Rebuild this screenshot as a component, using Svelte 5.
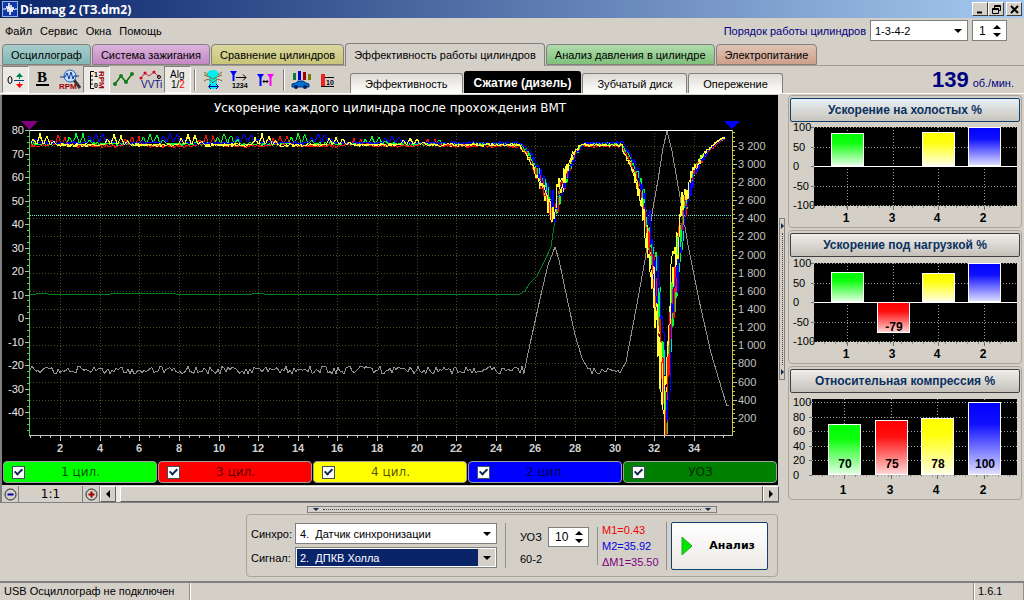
<script>
    const tabs = [
        { name: 'Осциллограф', tone: 'teal' },
        { name: 'Система зажигания', tone: 'violet' },
        { name: 'Сравнение цилиндров', tone: 'olive' },
        { name: 'Эффективность работы цилиндров', tone: 'current' },
        { name: 'Анализ давления в цилиндре', tone: 'green' },
        { name: 'Электропитание', tone: 'rose' }
    ];
    const modes = ['Эффективность', 'Сжатие (дизель)', 'Зубчатый диск', 'Опережение'];
    let mode = 'Сжатие (дизель)';

    let channels = [
        { name: '1 цил.', color: '#00ff00', on: true },
        { name: '3 цил.', color: '#ff0000', on: true },
        { name: '4 цил.', color: '#ffff00', on: true },
        { name: '2 цил.', color: '#0000ff', on: true },
        { name: 'УОЗ', color: '#008000', on: true }
    ];

    let count = 1;
    let advance = 10;

    // main chart scales
    const px = (t) => Math.round(18.5 + t * 19.8);
    const py = (v) => Math.round(223 - v * 2.35);
    const pr = (v) => Math.round(341 - v * 0.0907);
    const left = 28;
    const right = 730;
    const top = 35;
    const bottom = 341;

    const range = (from, to, step) => {
        const out = [];
        for (let v = from; v <= to; v += step) out.push(v);
        return out;
    };
    const xLabels = range(2, 34, 2);
    const yLabels = range(-40, 80, 10);
    const rLabels = range(200, 3200, 200);
    const spaced = (v) => (v >= 1000 ? Math.floor(v / 1000) + ' ' + String(v % 1000).padStart(3, '0') : v);

    function noise(seed) {
        let s = seed;
        return () => {
            s = (s * 16807) % 2147483647;
            return s / 2147483647;
        };
    }

    // mean cylinder acceleration: flat, dip, flat, deep dip
    const shape = [
        [28, 49], [518, 49], [526, 57], [535, 75], [546, 100], [554, 120], [560, 95], [572, 62],
        [581, 49], [620, 49], [632, 70], [641, 100], [646, 130], [653, 175], [658, 225], [662, 275],
        [665, 337], [667, 270], [671, 205], [677, 160], [683, 115], [693, 75], [705, 57], [716, 47], [724, 42]
    ];
    function level(x) {
        for (let i = 1; i < shape.length; i++) {
            const [x0, y0] = shape[i - 1];
            const [x1, y1] = shape[i];
            if (x <= x1) return y0 + ((y1 - y0) * (x - x0)) / (x1 - x0);
        }
        return 42;
    }

    function cylinder(seed, base, phase, shift) {
        const rnd = noise(seed);
        let d = '';
        for (let x = left + 1; x <= 723; x += 1) {
            const dip = (x > 518 && x < 581) || x > 620;
            let y = level(x + (dip ? shift : 0)) + base;
            if (dip) {
                const depth = Math.max(0, level(x) - 52);
                y += (rnd() - 0.5) * Math.min(70, 2 + depth * 0.45);
            } else {
                const at = (x - phase + 740) % 74;
                if (x < 440 && at < 32) {
                    const fade = Math.sin((at / 32) * Math.PI) * (x > 330 ? 0.7 : 1);
                    y -= (Math.abs((at % 7) - 3.5) / 3.5) * 12 * fade * (0.7 + rnd() * 0.3);
                } else {
                    y += (rnd() - 0.5) * 3;
                }
            }
            d += (d ? 'L' : 'M') + x + ' ' + Math.min(bottom - 1, Math.max(top + 3, y)).toFixed(1);
        }
        return d;
    }

    const traces = [
        { color: '#ffff30', d: cylinder(7213, 1, 98, 2), i: 2 },
        { color: '#00ff30', d: cylinder(5501, 0, 60, 0), i: 0 },
        { color: '#ff1010', d: cylinder(911, 2, 42, 1), i: 1 },
        { color: '#0000ff', d: cylinder(377, -1, 80, -1), i: 3 },
        { color: '#ffff30', d: cylinder(3301, 1, 98, 3), i: 2 }
    ];

    function wobble(from, to, y, amp, seed) {
        const rnd = noise(seed);
        let d = '';
        for (let x = from; x <= to; x += 2) d += 'L' + x + ' ' + (y + (rnd() - 0.5) * amp).toFixed(1);
        return d;
    }
    const rpmTrace =
        'M28 275' + wobble(30, 522, 275, 8, 71) +
        'L525 263L530 240L534 222L540 195L546 170L553 152L557 165L565 203L573 240L580 263L586 274' +
        wobble(588, 620, 276, 6, 45) +
        'L624 267L635 209L643 165L651 113L656 85L661 53L665 36L670 56L678 102L686 150L697 205L709 258L720 295L725 311L727 310';
    const advanceTrace =
        'M28 199L34 199L36 198L46 199L108 199L112 198L118 199L132 198L140 199L168 198L174 199L250 199L255 198L262 199L518 199L523 196L527 189L535 181L543 165L549 152L551 138L553 126L554 110';

    const panels = [
        {
            title: 'Ускорение на холостых %', zero: 45, unit: 0.39, x: 25, top: 6, bottom: 85, valueY: 74,
            ticks: [100, 50, 0, -50, -100], current: true,
            bars: [
                { n: 1, v: 85, x: 42 }, { n: 3, v: 0, x: 88 }, { n: 4, v: 87, x: 133 }, { n: 2, v: 100, x: 179 }
            ]
        },
        {
            title: 'Ускорение под нагрузкой %', zero: 45, unit: 0.39, x: 25, top: 6, bottom: 85, valueY: 74,
            ticks: [100, 50, 0, -50, -100],
            bars: [
                { n: 1, v: 77, x: 42 }, { n: 3, v: -79, x: 88, text: '-79' }, { n: 4, v: 75, x: 133 }, { n: 2, v: 100, x: 179 }
            ]
        },
        {
            title: 'Относительная компрессия %', zero: 82, unit: 0.73, x: 23, top: 6, bottom: 82, valueY: 75,
            ticks: [100, 80, 60, 40, 20, 0],
            bars: [
                { n: 1, v: 70, x: 39, text: '70' }, { n: 3, v: 75, x: 86, text: '75' },
                { n: 4, v: 78, x: 132, text: '78' }, { n: 2, v: 100, x: 179, text: '100' }
            ]
        }
    ];
    const fills = { 1: 'g-green', 3: 'g-red', 4: 'g-yellow', 2: 'g-blue' };
</script>

<div class="window">
    <header class="title-bar">
        <svg class="logo" width="16" height="16" viewBox="0 0 16 16">
            <rect x=".5" y=".5" width="15" height="15" fill="#1038a8" stroke="#8fb4e8" />
            <path d="M1 8H4L5 5L6 11L7 2L8 14L9 4L10 11L11 6L12 9L13 8H15" fill="none" stroke="#fff" />
        </svg>
        <h1>Diamag 2 (ТЗ.dm2)</h1>
        <div class="window-btns">
            <button aria-label="Свернуть"><svg width="9" height="9"><path d="M1 7.500H6" stroke="#000" stroke-width="2" /></svg></button>
            <button aria-label="Восстановить"><svg width="9" height="9"><path d="M2.500 3V.5H8.500V5.500H7M2.500 1.500H8.500M.5 3.500H6.500V8.500H.5ZM.5 4.500H6.500" fill="none" stroke="#000" /></svg></button>
            <button class="close" aria-label="Закрыть"><svg width="9" height="9"><path d="M1 1L8 8M8 1L1 8" stroke="#000" stroke-width="2" /></svg></button>
        </div>
    </header>

    <div class="menu-bar">
        <nav>
            <button>Файл</button>
            <button>Сервис</button>
            <button>Окна</button>
            <button>Помощь</button>
        </nav>
        <label for="order">Порядок работы цилиндров</label>
        <div class="select order">
            <select id="order"><option>1-3-4-2</option><option>1-2-4-3</option></select>
        </div>
        <div class="spin small">
            <input type="text" aria-label="Цилиндр" bind:value={count} />
            <div class="arrows">
                <button aria-label="Больше" on:click={() => count++}><i class="up"></i></button>
                <button aria-label="Меньше" on:click={() => count--}><i class="down"></i></button>
            </div>
        </div>
    </div>

    <nav class="tabs">
        {#each tabs as tab}
            <button class="tab {tab.tone}">{tab.name}</button>
        {/each}
    </nav>

    <div class="tool-row">
        <div class="tools">
            <button class="tool pressed" aria-label="Ноль">
                <svg width="24" height="24"><ellipse cx="6" cy="12" rx="2" ry="3.500" fill="none" stroke="#000" /><path d="M10 12.500H20" stroke="#004080" /><path d="M15.500 5L12 9H15V11H16V9H19Z" fill="#008040" /><path d="M15.500 20L12 16H15V14H16V16H19Z" fill="#f00" /></svg>
            </button>
            <button class="tool" aria-label="Жирный">
                <svg width="24" height="24"><text x="6" y="14" class="ico-b">B</text><path d="M5 17H18" stroke="#000" stroke-width="2" /></svg>
            </button>
            <button class="tool" aria-label="Обороты">
                <svg width="26" height="24"><path d="M17 12L23 20" stroke="#333" stroke-width="3" /><circle cx="13" cy="8" r="6" fill="#c4dcff" stroke="#2860b0" /><path d="M3 9H8L10 5L12 11L14 4L16 11L17 8H22" fill="none" stroke="#103a90" /><text x="2" y="21" class="ico-s" fill="#a00000">RPM</text></svg>
            </button>
            <button class="tool pressed" aria-label="Шкала оборотов">
                <svg width="24" height="24"><path d="M9 3.500H5.500V20.500H9M6 12H8M6 8H8M6 16H8" fill="none" stroke="#000" /><text x="9" y="9" class="ico-n">1</text><text x="9" y="20" class="ico-n">0</text><text x="3" y="-14" class="ico-s" fill="#a00000" transform="rotate(90)">RPM</text></svg>
            </button>
            <button class="tool" aria-label="Точки">
                <svg width="24" height="24"><path d="M3 16L9 8L14 14L20 6" fill="none" stroke="#107010" stroke-width="1.500" /><g fill="#108020"><circle cx="3" cy="16" r="2" /><circle cx="9" cy="8" r="2" /><circle cx="14" cy="14" r="2" /><circle cx="20" cy="6" r="2" /></g></svg>
            </button>
            <button class="tool" aria-label="VVTi">
                <svg width="26" height="24"><path d="M3 10L7 5L11 8L16 4L21 9" fill="none" stroke="#c03050" /><g fill="#d00020"><circle cx="3" cy="10" r="1.500" /><circle cx="7" cy="5" r="1.500" /><circle cx="16" cy="4" r="1.500" /></g><circle cx="21" cy="9" r="1.500" fill="none" stroke="#000" /><text x="3" y="20" class="ico-t" fill="#101080">VVTi</text></svg>
            </button>
            <button class="tool pressed" aria-label="Алгоритм">
                <svg width="24" height="24"><text x="4" y="10" class="ico-t">Alg</text><text x="5" y="20" class="ico-t">1/<tspan fill="#f00">2</tspan></text></svg>
            </button>
            <span class="sep"></span>
            <button class="tool" aria-label="Наложение">
                <svg width="24" height="24"><ellipse cx="12" cy="6" rx="6" ry="4" fill="#00f0f0" /><path d="M8 9H16V21H8Z" fill="#00f0f0" /><path d="M3 7Q7 8 12 11Q17 8 21 7M3 13Q8 9 12 15Q16 9 21 13M3 4L7 7M21 4L17 7" fill="none" stroke="#806020" /><path d="M8 18.500H17M10 16L7.500 18.500L10 21M15 16L17.500 18.500L15 21" fill="none" stroke="#00a" /></svg>
            </button>
            <button class="tool" aria-label="Маркеры по порядку">
                <svg width="24" height="24"><path d="M2 3H9L5.500 8Z" fill="#00f" /><path d="M5.500 5V13" stroke="#00f" stroke-width="2" /><path d="M8 9.500H18M15 6.500L18 9.500L15 12.500" fill="none" stroke="#000" /><text x="4" y="20" class="ico-n">1234</text></svg>
            </button>
            <button class="tool" aria-label="Интервал">
                <svg width="24" height="24"><path d="M2 6H9L5.500 11Z" fill="#00f" /><path d="M5.500 9V18" stroke="#00f" stroke-width="2" /><path d="M12 6H19L15.500 11Z" fill="#f0f" /><path d="M15.500 9V18" stroke="#f0f" stroke-width="2" /><path d="M8 13.500H13M9.500 12L8 13.500L9.500 15M11.500 12L13 13.500L11.500 15" fill="none" stroke="#000" /></svg>
            </button>
            <span class="sep"></span>
            <button class="tool" aria-label="Автомобиль">
                <svg width="24" height="24"><path d="M3 5H6V12H3Z" fill="#008040" /><path d="M8 3H11V12H8Z" fill="#00c" /><path d="M13 4H16V12H13Z" fill="#a00000" /><path d="M18 6H21V12H18Z" fill="#708000" /><path d="M2 19V16L6 15L8 13H13L16 15L19 16V19Z" fill="#0070d0" stroke="#003080" /><circle cx="6" cy="19" r="2" fill="#002060" /><circle cx="15" cy="19" r="2" fill="#002060" /></svg>
            </button>
            <button class="tool" aria-label="Десять">
                <svg width="24" height="24"><path d="M4 6H8V18H4Z" fill="#f02020" /><path d="M8 9.500H17M4 18.500H17" stroke="#000" /><text x="9" y="17" class="ico-n">10</text></svg>
            </button>
        </div>
        <nav class="modes">
            {#each modes as m}
                <button class:active={m === mode} on:click={() => (mode = m)}>{m}</button>
            {/each}
        </nav>
        <div class="rpm"><b>139</b><span>об./мин.</span></div>
    </div>

    <main>
        <section class="scope">
            <div class="screen">
                <svg class="plot" viewBox="0 0 776 365">
                    <g class="grid">
                        {#each rLabels as v}
                            <path d="M{left} {pr(v)}.5H{right}" />
                        {/each}
                        {#each xLabels as t}
                            <path d="M{px(t)}.5 {top}V{bottom}" />
                        {/each}
                    </g>
                    <path d="M28 120.500H730" class="cursor" />
                    <path d={rpmTrace} class="trace" stroke="#909090" />
                    {#if channels[4].on}
                        <path d={advanceTrace} class="trace" stroke="#008020" />
                    {/if}
                    {#each traces as t}
                        {#if channels[t.i].on}
                            <path d={t.d} class="trace" stroke={t.color} />
                        {/if}
                    {/each}
                    <path d="M28 35.500H730" stroke="#fff" />
                    <path d="M27.500 35V341" stroke="#58c858" />
                    <path d="M730.500 35V341" stroke="#c8c840" />
                    <path d="M27 340.500H731" stroke="#c8c8c8" />
                    {#each range(-47.5, 77.5, 2.5) as v}
                        <path d="M25 {py(v)}.5H28" stroke="#58c858" />
                    {/each}
                    {#each yLabels as v}
                        <path d="M23 {py(v)}.5H28" stroke="#a0c8a0" />
                        <text x="22" y={py(v) + 4} class="y-label">{v}</text>
                    {/each}
                    {#each range(50, 3350, 50) as v}
                        <path d="M731 {pr(v)}.5H733" stroke="#c8c840" />
                    {/each}
                    {#each rLabels as v}
                        <path d="M731 {pr(v)}.5H735" stroke="#c0c0a0" />
                        <text x="736" y={pr(v) + 4} class="r-label">{spaced(v)}</text>
                    {/each}
                    {#each range(0.5, 35.5, 0.5) as t}
                        <path d="M{px(t)}.5 341V343" stroke="#c8c8c8" />
                    {/each}
                    {#each xLabels as t}
                        <path d="M{px(t)}.5 341V346" stroke="#c8c8c8" />
                        <text x={px(t)} y="357" class="x-label">{t}</text>
                    {/each}
                    <path d="M19 26H36L27.500 35Z" fill="#800080" />
                    <path d="M722 26H738L730 34Z" fill="#0000ff" />
                    <text x="388" y="17" class="plot-title">Ускорение каждого цилиндра после прохождения ВМТ</text>
                </svg>
                <div class="legend">
                    {#each channels as ch}
                        <label style="background: {ch.color}">
                            <input type="checkbox" bind:checked={ch.on} />
                            <span>{ch.name}</span>
                        </label>
                    {/each}
                </div>
            </div>
            <div class="scroll-row">
                <button class="zoom" aria-label="Уменьшить"><svg width="15" height="15"><circle cx="7.500" cy="7.500" r="5.500" fill="none" stroke="#222" /><path d="M4.500 7.500H10.500" stroke="#00a" stroke-width="2" /></svg></button>
                <output>1:1</output>
                <button class="zoom" aria-label="Увеличить"><svg width="15" height="15"><circle cx="7.500" cy="7.500" r="5.500" fill="none" stroke="#222" /><path d="M4.500 7.500H10.500M7.500 4.500V10.500" stroke="#a00000" stroke-width="2" /></svg></button>
                <button class="step" aria-label="Влево"><i class="back"></i></button>
                <div class="track"><div class="thumb"></div></div>
                <button class="step" aria-label="Вправо"><i class="fwd"></i></button>
            </div>
        </section>

        <div class="v-split"><div class="grip"><i class="fwd"></i><span></span><i class="fwd"></i></div></div>

        <aside>
            <svg width="0" height="0" class="defs">
                <defs>
                    <linearGradient id="g-green" x2="0" y2="1"><stop stop-color="#00ff00" /><stop offset=".3" stop-color="#10ff10" /><stop offset="1" stop-color="#e4ffe4" /></linearGradient>
                    <linearGradient id="g-red" x2="0" y2="1"><stop stop-color="#ff0000" /><stop offset=".3" stop-color="#ff1010" /><stop offset="1" stop-color="#ffd8d8" /></linearGradient>
                    <linearGradient id="g-yellow" x2="0" y2="1"><stop stop-color="#ffff00" /><stop offset=".3" stop-color="#ffff10" /><stop offset="1" stop-color="#ffffe4" /></linearGradient>
                    <linearGradient id="g-blue" x2="0" y2="1"><stop stop-color="#0000ff" /><stop offset=".3" stop-color="#1010ff" /><stop offset="1" stop-color="#e0e0ff" /></linearGradient>
                </defs>
            </svg>
            {#each panels as p}
                <div class="panel">
                    <button class="panel-btn" class:current={p.current}>{p.title}</button>
                    <svg viewBox="1 0 230 106">
                        <rect x={p.x} y={p.top} width={228 - p.x} height={p.bottom - p.top} fill="#000" />
                        {#each p.ticks as v}
                            <path d="M{p.x} {Math.round(p.zero - v * p.unit)}.5H228" class="dots" />
                            <path d="M{p.x - 3} {Math.round(p.zero - v * p.unit)}.5H{p.x}" stroke="#707070" />
                            <text x="4" y={Math.round(p.zero - v * p.unit) + 4} class="tick">{v}</text>
                        {/each}
                        {#each range(p.x + 10, 220, 11) as x}
                            <path d="M{x}.5 {p.bottom}V{p.bottom + 2}" stroke="#909090" />
                        {/each}
                        {#each p.bars as b}
                            <path d="M{b.x + 16}.5 {p.top}V{p.bottom}" class="dots" />
                            <path d="M{b.x + 16}.5 {p.bottom}V{p.bottom + 4}" stroke="#707070" />
                            {#if b.v}
                                <rect
                                    x={b.x + 0.5}
                                    y={Math.round(p.zero - Math.max(b.v, 0) * p.unit) + 0.5}
                                    width="32"
                                    height={Math.round(Math.abs(b.v) * p.unit) - 1}
                                    fill="url(#{fills[b.n]})"
                                    stroke="#fff"
                                />
                            {/if}
                            {#if b.text}
                                <text x={b.x + 17} y={p.valueY} class="value">{b.text}</text>
                            {/if}
                            <text x={b.x + 15} y="101" class="num">{b.n}</text>
                        {/each}
                        {#if p.zero < 80}
                            <path d="M{p.x} {p.zero}.5H228" stroke="#fff" />
                        {/if}
                    </svg>
                </div>
            {/each}
        </aside>
    </main>

    <footer>
        <div class="h-split"><i class="down"></i><span></span><i class="down"></i></div>
        <div class="controls">
            <div class="sources">
                <label for="sync">Синхро:</label>
                <div class="select"><select id="sync"><option>4.&nbsp; Датчик синхронизации</option></select></div>
                <label for="signal">Сигнал:</label>
                <div class="select focused"><select id="signal"><option>2.&nbsp; ДПКВ Холла</option></select></div>
            </div>
            <div class="angle">
                <label for="adv">УОЗ</label>
                <div class="spin">
                    <input id="adv" type="text" bind:value={advance} />
                    <div class="arrows">
                        <button aria-label="Больше" on:click={() => advance++}><i class="up"></i></button>
                        <button aria-label="Меньше" on:click={() => advance--}><i class="down"></i></button>
                    </div>
                </div>
                <span>60-2</span>
            </div>
            <div class="markers">
                <span class="m1">M1=0.43</span>
                <span class="m2">M2=35.92</span>
                <span class="dm">ΔM1=35.50</span>
            </div>
            <button class="analyse">
                <svg width="12" height="20"><path d="M1 1L11 10L1 19Z" fill="#00e800" stroke="#30a030" /></svg>
                <span>Анализ</span>
            </button>
        </div>
    </footer>

    <div class="status">
        <span>USB Осциллограф не подключен</span>
        <span></span>
        <span>1.6.1</span>
    </div>
</div>

<style>
    :global(body) { margin: 0; background: #d4d0c8; }
    .window { display: flex; flex-direction: column; min-height: 100vh; background: #d4d0c8; color: #000; font: 11px "Liberation Sans", Arial, sans-serif; }
    .window * { box-sizing: border-box; }
    button { margin: 0; padding: 0; border: none; background: none; color: inherit; font: inherit; }
    svg { display: block; }

    .title-bar { display: flex; align-items: center; height: 18px; padding: 0 2px; gap: 2px; background: linear-gradient(90deg, #0a246a, #a6caf0); }
    .title-bar h1 { flex: 1; margin: 0; color: #fff; font: bold 12px "Open Sans", "Noto Sans", sans-serif; }
    .window-btns { display: flex; }
    .window-btns button { display: flex; align-items: center; justify-content: center; width: 16px; height: 14px; background: #d4d0c8; border: 1px solid; border-color: #fff #404040 #404040 #fff; }
    .window-btns .close { margin-left: 2px; }

    .menu-bar { display: flex; align-items: center; height: 25px; padding: 0 17px 0 5px; }
    .menu-bar nav { display: flex; flex: 1; gap: 8px; }
    .menu-bar label { margin-right: 4px; color: #000080; }
    .menu-bar .order { width: 98px; margin-right: 4px; }

    .select { position: relative; height: 21px; background: #fff; border: 1px solid #808080; }
    .select select { appearance: none; width: 100%; height: 19px; padding: 0 20px 0 4px; border: none; outline: none; background: transparent; color: #000; font: 11px "Liberation Sans", Arial, sans-serif; }
    .select::after { content: ""; position: absolute; right: 5px; top: 8px; border: 4px solid transparent; border-top-color: #000; border-bottom: 0; pointer-events: none; }
    .focused { padding: 1px; }
    .focused select { height: 17px; background: linear-gradient(#0a246a, #0a246a) left / calc(100% - 17px) 100% no-repeat #d4d0c8; color: #fff; padding-left: 3px; }

    .spin { display: flex; width: 41px; height: 20px; background: #fff; border: 1px solid #808080; }
    .small { width: 35px; height: 21px; }
    .spin input { flex: 1; min-width: 0; padding: 0 0 0 6px; border: none; outline: none; background: none; font: 12px "Liberation Sans", Arial, sans-serif; }
    .arrows { display: flex; flex-direction: column; justify-content: center; gap: 4px; width: 18px; }
    .arrows button { display: flex; justify-content: center; }

    i { display: block; width: 0; height: 0; border: 4px solid transparent; }
    .up { border-bottom-color: #000; border-top: 0; }
    .down { border-top-color: #000; border-bottom: 0; }
    .back { border-right-color: #000; border-left: 0; }
    .fwd { border-left-color: #000; border-right: 0; }

    .tabs { display: flex; align-items: flex-end; height: 23px; padding-left: 2px; border-bottom: 1px solid #a09c94; gap: 1px; }
    .tab { height: 21px; padding: 0 8px; border: 1px solid #808080; border-radius: 4px 4px 0 0; white-space: nowrap; }
    .teal { background: linear-gradient(#a8cccc, #80b8b4); }
    .violet { background: linear-gradient(#dcb4dc, #c488c4); }
    .olive { background: linear-gradient(#dcd8a0, #c8c478); }
    .current { height: 23px; margin-bottom: -1px; background: #d4d0c8; border-bottom: none; }
    .green { background: linear-gradient(#b0dcac, #80c07c); }
    .rose { background: linear-gradient(#e0c4b4, #cca08c); }

    .tool-row { display: flex; align-items: flex-end; height: 28px; border-bottom: 1px solid #fff; }
    .tools { display: flex; align-items: center; width: 348px; height: 27px; padding-left: 2px; }
    .tool { display: flex; align-items: center; justify-content: center; width: 27px; height: 27px; }
    .pressed { background: #ebe9e4; border: 1px solid; border-color: #808080 #fff #fff #808080; }
    .sep { width: 2px; height: 22px; margin: 0 3px; border-left: 1px solid #808080; border-right: 1px solid #fff; }
    .ico-b { font: bold 15px "Liberation Serif", serif; }
    .ico-s { font: bold 8px "Liberation Sans", sans-serif; }
    .ico-t { font: 10px "Liberation Sans", sans-serif; }
    .ico-n { font: bold 7px "Liberation Sans", sans-serif; }

    .modes { display: flex; align-items: flex-end; gap: 1px; padding-left: 2px; }
    .modes button { height: 20px; padding: 0 14px; background: linear-gradient(#dedad4, #fff); border: 1px solid #808080; border-bottom: none; border-radius: 3px 3px 0 0; white-space: nowrap; }
    .modes .active { height: 22px; padding: 0 9px; background: #000; border-color: #000; color: #fff; font: bold 12px "Liberation Sans", Arial, sans-serif; }
    .rpm { display: flex; flex: 1; align-items: baseline; justify-content: flex-end; gap: 4px; padding-right: 10px; color: #000080; }
    .rpm b { font-size: 22px; }

    main { display: grid; grid-template-columns: minmax(0, 1fr) 6px 239px; padding-top: 1px; }
    .scope { border-left: 2px solid #808080; }
    .screen { margin-right: 1px; background: #000; }
    .plot { width: 100%; height: auto; }
    .trace { fill: none; stroke-width: 1; shape-rendering: crispEdges; }
    .cursor { stroke: #60f0d8; stroke-dasharray: 1 1; shape-rendering: crispEdges; }
    .grid path { stroke: #4c4c22; stroke-dasharray: 1 2; }
    .y-label { fill: #e8e8e8; font-size: 11px; text-anchor: end; }
    .r-label { fill: #c0c0c0; font-size: 11px; }
    .x-label { fill: #d0d0d0; font-size: 11px; font-weight: bold; text-anchor: middle; }
    .plot-title { fill: #fff; font: 12px "DejaVu Sans", Verdana, sans-serif; text-anchor: middle; }

    .legend { display: grid; grid-template-columns: repeat(5, 1fr); gap: 1px; padding: 1px 1px 2px; }
    .legend label { display: flex; align-items: center; height: 22px; padding: 0 8px; border: 1px solid #a0a0a0; border-radius: 4px; }
    .legend span { flex: 1; padding-right: 12px; color: rgba(0, 0, 0, 0.7); font: 12px "DejaVu Sans", Verdana, sans-serif; text-align: center; }
    .legend input { appearance: none; width: 13px; height: 13px; margin: 0; background: #fff; border: 1px solid #405060; display: flex; align-items: center; justify-content: center; }
    .legend input:checked::after { content: ""; width: 3px; height: 6px; margin-bottom: 2px; border: solid #102850; border-width: 0 2px 2px 0; transform: rotate(45deg); }

    .scroll-row { display: flex; height: 18px; padding-top: 1px; border-bottom: 1px solid #808080; }
    .zoom { display: flex; align-items: center; justify-content: center; width: 17px; border-right: 1px solid #808080; }
    .scroll-row output { width: 64px; border-right: 1px solid #808080; font: 12px/17px "DejaVu Sans", Verdana, sans-serif; text-align: center; }
    .step { display: flex; align-items: center; justify-content: center; width: 16px; border: 1px solid; border-color: #fff #606060 #606060 #fff; }
    .track { flex: 1; padding-left: 4px; background: #ebe9e4; }
    .thumb { height: 100%; background: #d4d0c8; border: 1px solid; border-color: #fff #606060 #606060 #fff; }

    .v-split { display: flex; align-items: center; }
    .grip { display: flex; flex-direction: column; align-items: center; width: 6px; height: 162px; padding: 4px 0; border: 1px solid #808080; }
    .grip span { flex: 1; border-left: 1px dotted #404040; margin: 4px 0; }
    .grip i, .h-split i { border-width: 3px; }
    .grip i { border-right: 0; border-left-color: #102850; }

    aside { display: flex; flex-direction: column; gap: 2px; padding: 0 2px 0 3px; }
    .defs { position: absolute; }
    .panel { padding: 2px 1px 0; border: 1px solid #a8a49c; border-radius: 4px; }
    .panel svg { width: 100%; height: auto; }
    .panel-btn { display: block; width: 100%; height: 24px; background: linear-gradient(#f0eeea, #c4c0b8); border: 1px solid #404040; border-radius: 2px; color: #0a3060; font-weight: bold; font-size: 12px; }
    .panel .current { border-color: #104070; background: linear-gradient(#e8f0f4, #c8c4bc); }
    .dots { stroke: #a0a0a0; stroke-dasharray: 1 2; }
    .tick { font-size: 11px; }
    .num, .value { font-size: 12px; font-weight: bold; text-anchor: middle; }

    footer { display: flex; flex-direction: column; align-items: center; flex: 1; padding: 3px 0; border-bottom: 1px solid #808080; }
    .h-split { display: flex; align-items: center; align-self: flex-start; width: 40%; height: 7px; margin-left: 30%; padding: 0 5px; border: 1px solid #808080; }
    .h-split span { flex: 1; margin: 0 4px; border-top: 1px dotted #404040; }
    .h-split .down { border-bottom: 0; border-top-color: #102850; }
    .controls { display: flex; align-items: center; height: 63px; margin: 1px 0 0; padding: 0 9px 0 4px; border: 1px solid #a8a49c; border-radius: 4px; }
    .sources { display: grid; grid-template-columns: 44px 202px; row-gap: 3px; align-items: center; padding-right: 8px; border-right: 1px solid #909090; }
    .angle { display: grid; grid-template-columns: 28px 41px; row-gap: 6px; align-items: center; padding: 0 8px 0 14px; border-right: 1px solid #909090; }
    .angle .spin { height: 20px; }
    .markers { display: flex; flex-direction: column; justify-content: space-between; width: 69px; height: 48px; padding-left: 4px; border-right: 1px solid #909090; line-height: 16px; white-space: nowrap; }
    .m1 { color: #f00000; }
    .m2 { color: #0000e0; }
    .dm { color: #800080; }
    .analyse { display: flex; align-items: center; width: 97px; height: 48px; margin-left: 4px; padding: 0 12px 0 9px; background: linear-gradient(#fff, #eceae6); border: 1px solid #104070; border-radius: 2px; font: bold 11px "DejaVu Sans", Verdana, sans-serif; }
    .analyse span { flex: 1; text-align: right; }

    .status { display: grid; grid-template-columns: 190px 1fr 50px; height: 18px; border-top: 1px solid #808080; line-height: 17px; }
    .status span { padding-left: 4px; border-right: 1px solid #909090; box-shadow: 1px 0 #fff; white-space: nowrap; }
</style>
